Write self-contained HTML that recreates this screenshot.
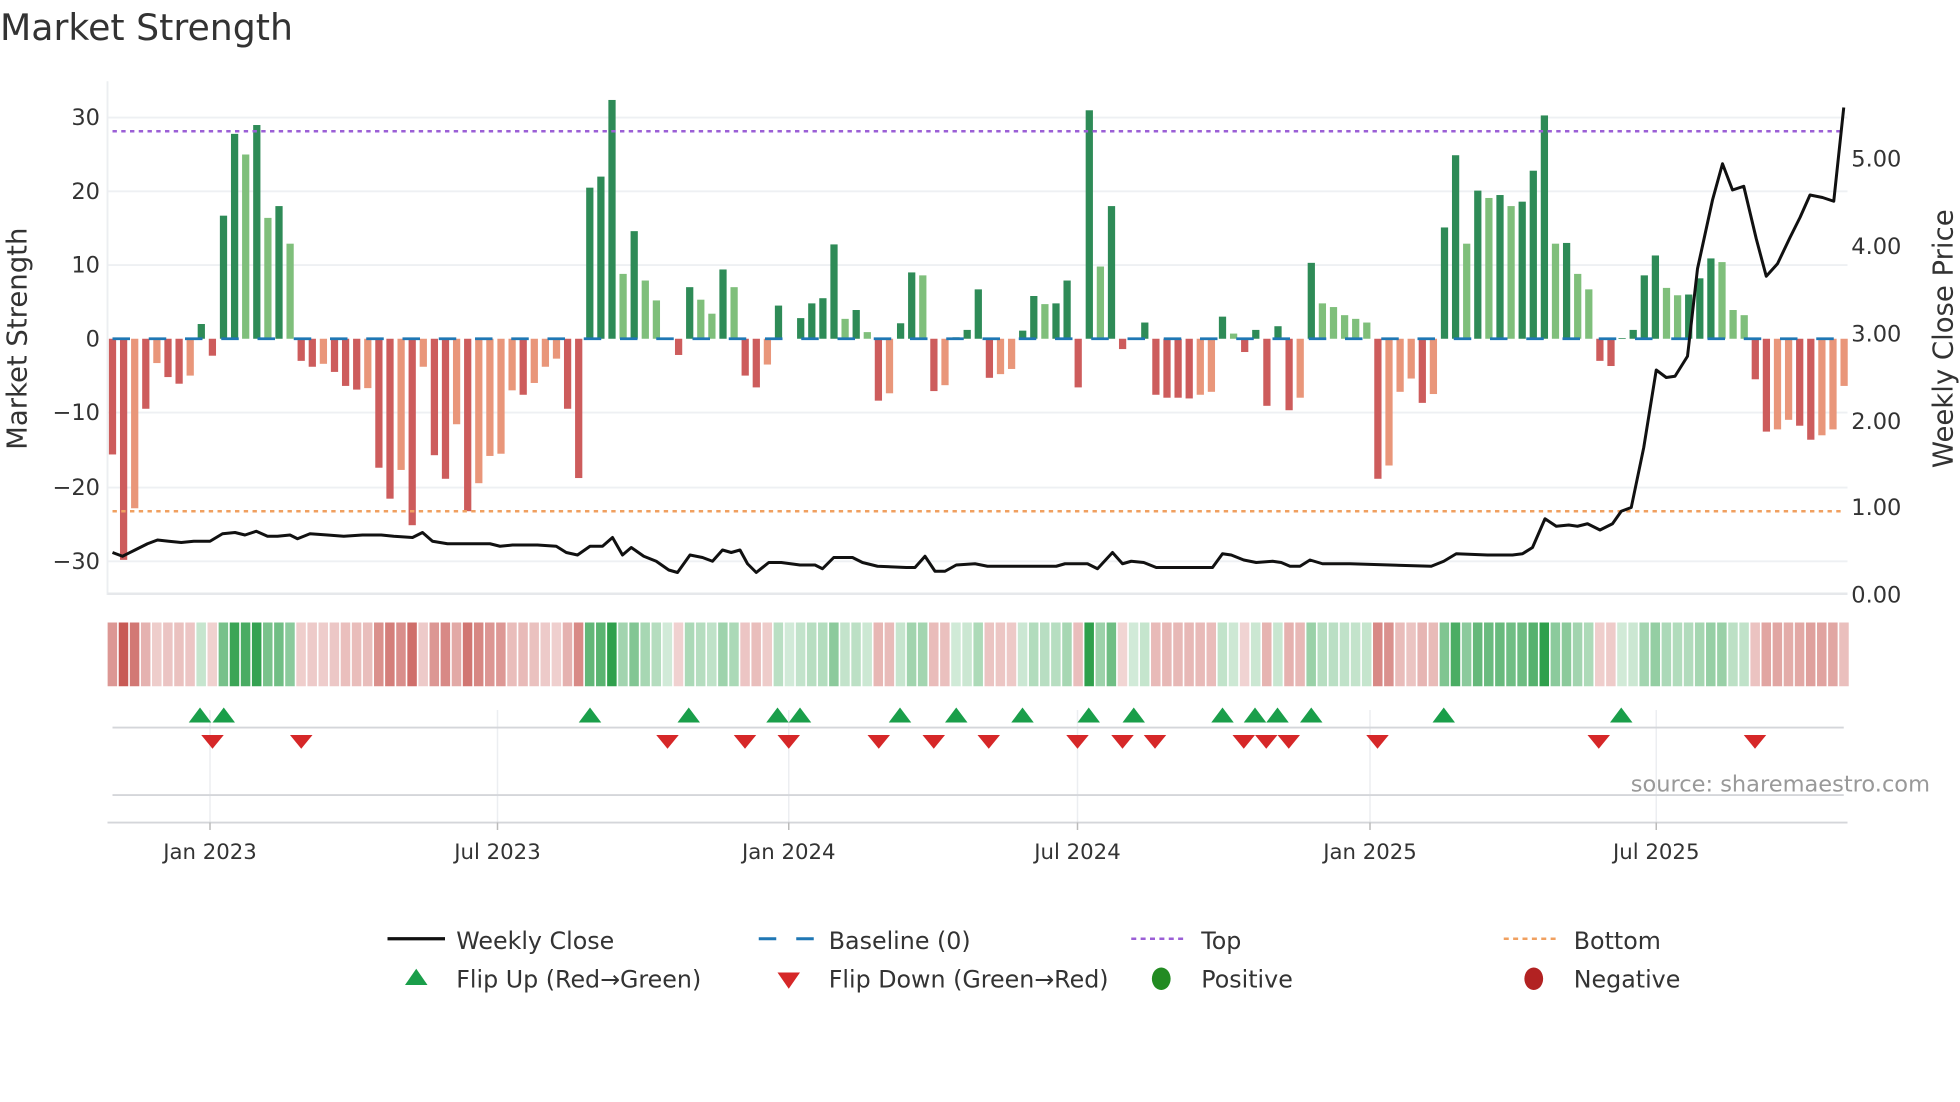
<!DOCTYPE html>
<html><head><meta charset="utf-8"><style>
html,body{margin:0;padding:0;background:#fff;}
svg{display:block;font-family:"DejaVu Sans","Liberation Sans",sans-serif;}
</style></head><body>
<svg id="s" width="1960" height="1102" viewBox="0 0 1568 881.6" xmlns="http://www.w3.org/2000/svg">
<text x="0" y="32" font-size="29" fill="#333">Market Strength</text>
<g stroke="#eef0f3" stroke-width="1.5">
<line x1="86" x2="1478" y1="94" y2="94"/><line x1="86" x2="1478" y1="153" y2="153"/>
<line x1="86" x2="1478" y1="212" y2="212"/><line x1="86" x2="1478" y1="330" y2="330"/>
<line x1="86" x2="1478" y1="390" y2="390"/><line x1="86" x2="1478" y1="449" y2="449"/>
</g>
<line x1="86" x2="86" y1="65" y2="476" stroke="#eceef1" stroke-width="1.5"/>
<line x1="86" x2="1478" y1="475" y2="475" stroke="#e6e8eb" stroke-width="2"/>
<g font-size="18" fill="#333" text-anchor="end">
<text x="80" y="100">30</text><text x="80" y="159">20</text><text x="80" y="218">10</text>
<text x="80" y="277">0</text><text x="80" y="336">−10</text><text x="80" y="396">−20</text><text x="80" y="455">−30</text>
</g>
<g font-size="18" fill="#333">
<text x="1481" y="133">5.00</text><text x="1481" y="203">4.00</text><text x="1481" y="273">3.00</text>
<text x="1481" y="343">2.00</text><text x="1481" y="412">1.00</text><text x="1481" y="482">0.00</text>
</g>
<text transform="translate(21,271) rotate(-90)" font-size="22" fill="#333" text-anchor="middle">Market Strength</text>
<text transform="translate(1562,271) rotate(-90)" font-size="22" fill="#333" text-anchor="middle">Weekly Close Price</text>
<g id="bars"></g>
<line x1="90" x2="1476" y1="271" y2="271" stroke="#1f77b4" stroke-width="2.2" stroke-dasharray="14 15"/>
<line x1="90" x2="1476" y1="105" y2="105" stroke="#9b5fd6" stroke-width="2" stroke-dasharray="3.5 3.5"/>
<line x1="90" x2="1476" y1="409" y2="409" stroke="#f0a060" stroke-width="2" stroke-dasharray="3.5 3.5"/>
<polyline fill="none" stroke="#111" stroke-width="2.4" stroke-linejoin="round" points="90,442 98,445 108,440 118,435 126,432 135,433 145,434 155,433 168,433 178,427 188,426 196,428 205,425 214,429 222,429 232,428 238,431 248,427 262,428 275,429 290,428 305,428 315,429 330,430 338,426 346,433 358,435 375,435 392,435 400,437 410,436 430,436 445,437 453,442 462,444 472,437 482,437 490,430 498,444 505,438 515,445 525,449 535,456 542,458 552,444 562,446 570,449 578,440 585,442 592,440 598,451 605,458 615,450 625,450 640,452 652,452 658,455 667,446 682,446 690,450 702,453 725,454 732,454 740,445 748,457 756,457 765,452 780,451 790,453 800,453 830,453 845,453 852,451 870,451 878,455 890,442 898,451 905,449 915,450 925,454 970,454 978,443 985,444 995,448 1005,450 1018,449 1025,450 1032,453 1040,453 1048,448 1058,451 1080,451 1145,453 1155,449 1165,443 1190,444 1210,444 1218,443 1226,438 1236,415 1245,421 1255,420 1262,421 1270,419 1280,424 1290,419 1297,409 1305,406 1315,358 1325,296 1333,302 1340,301 1350,285 1358,215 1370,160 1378,131 1386,152 1395,149 1405,191 1413,221 1422,211 1432,190 1440,174 1448,156 1458,158 1467,161 1475,86"/>
<g id="heat"></g>
<g stroke="#eceef1" stroke-width="1.2">
<line x1="168" x2="168" y1="568" y2="658"/><line x1="398" x2="398" y1="568" y2="658"/>
<line x1="631" x2="631" y1="568" y2="658"/><line x1="862" x2="862" y1="568" y2="658"/>
<line x1="1096" x2="1096" y1="568" y2="658"/><line x1="1325" x2="1325" y1="568" y2="658"/>
</g>
<line x1="90" x2="1475" y1="582" y2="582" stroke="#d4d6da" stroke-width="1.5"/>
<line x1="90" x2="1475" y1="636" y2="636" stroke="#d4d6da" stroke-width="1.5"/>
<line x1="86" x2="1478" y1="658" y2="658" stroke="#d4d6da" stroke-width="1.5"/>
<g stroke="#bbb" stroke-width="1.2">
<line x1="168" x2="168" y1="658" y2="664"/><line x1="398" x2="398" y1="658" y2="664"/>
<line x1="631" x2="631" y1="658" y2="664"/><line x1="862" x2="862" y1="658" y2="664"/>
<line x1="1096" x2="1096" y1="658" y2="664"/><line x1="1325" x2="1325" y1="658" y2="664"/>
</g>
<g id="mk"></g>
<text x="1544" y="633" font-size="18" fill="#999" text-anchor="end">source: sharemaestro.com</text>
<g font-size="17" fill="#333" text-anchor="middle">
<text x="168" y="687">Jan 2023</text><text x="398" y="687">Jul 2023</text><text x="631" y="687">Jan 2024</text>
<text x="862" y="687">Jul 2024</text><text x="1096" y="687">Jan 2025</text><text x="1325" y="687">Jul 2025</text>
</g>
<g font-size="19" fill="#333">
<line x1="310" x2="356" y1="751" y2="751" stroke="#111" stroke-width="2.6"/>
<text x="365" y="759">Weekly Close</text>
<line x1="607" x2="651" y1="751" y2="751" stroke="#1f77b4" stroke-width="2.4" stroke-dasharray="14 16"/>
<text x="663" y="759">Baseline (0)</text>
<line x1="905" x2="949" y1="751" y2="751" stroke="#9b5fd6" stroke-width="2" stroke-dasharray="4 3.5"/>
<text x="961" y="759">Top</text>
<line x1="1203" x2="1247" y1="751" y2="751" stroke="#f0a060" stroke-width="2" stroke-dasharray="4 3.5"/>
<text x="1259" y="759">Bottom</text>
<polygon points="324,788 342,788 333,775" fill="#1a9e4a"/>
<text x="365" y="790">Flip Up (Red→Green)</text>
<polygon points="622,778 640,778 631,791" fill="#d62728"/>
<text x="663" y="790">Flip Down (Green→Red)</text>
<ellipse cx="929" cy="783" rx="7.5" ry="9" fill="#228b22"/>
<text x="961" y="790">Positive</text>
<ellipse cx="1227" cy="783" rx="7.5" ry="9" fill="#b22222"/>
<text x="1259" y="790">Negative</text>
</g>
</svg>
<script>
(function(){
var v=[-15.7,-30,-23,-9.5,-3.3,-5.2,-6.1,-5,2,-2.3,16.7,27.8,25,29,16.4,18,12.9,-3,-3.8,-3.4,-4.5,-6.4,-6.9,-6.7,-17.5,-21.7,-17.8,-25.3,-3.8,-15.8,-19,-11.6,-23.4,-19.6,-15.9,-15.6,-7,-7.6,-6,-3.8,-2.7,-9.5,-18.9,20.5,22,32.4,8.8,14.6,7.9,5.2,0,-2.2,
7,5.3,3.4,9.4,7,-5,-6.6,-3.5,4.5,0,2.8,4.8,5.5,12.8,2.7,3.9,0.9,-8.4,-7.4,2.1,9,8.6,-7.1,-6.3,0.2,1.2,6.7,-5.3,-4.8,-4.1,1.1,5.8,4.7,4.8,7.9,-6.6,31,9.8,18,-1.4,0,2.2,-7.6,-8,-8,-8.1,-7.6,-7.2,3,0.7,-1.8,1.2,-9.1,
1.7,-9.7,-8,10.3,4.8,4.3,3.2,2.7,2.2,-19,-17.2,-7.2,-5.4,-8.7,-7.5,15.1,24.9,12.9,20.1,19.1,19.5,18,18.6,22.8,30.3,12.9,13,8.8,6.7,-3,-3.7,0.1,1.2,8.6,11.3,6.9,5.9,6,8.2,10.9,10.4,3.9,3.2,-5.5,-12.6,-12.3,-11,-11.8,-13.7,-13.1,-12.3,-6.4];
var light={3:1,5:1,8:1,13:1,15:1,17:1,20:1,24:1,27:1,29:1,32:1,34:1,35:1,36:1,37:1,39:1,40:1,41:1,47:1,49:1,50:1,54:1,55:1,57:1,60:1,67:1,69:1,71:1,74:1,76:1,81:1,82:1,85:1,90:1,99:1,100:1,102:1,108:1,110:1,111:1,112:1,113:1,114:1,116:1,117:1,118:1,120:1,123:1,125:1,127:1,131:1,133:1,134:1,141:1,142:1,146:1,147:1,148:1,151:1,152:1,155:1,156:1,157:1};
var ns="http://www.w3.org/2000/svg",b=document.getElementById("bars"),h=document.getElementById("heat");
function mix(c,t){return "rgb("+c.map(function(x){return Math.round(255+(x-255)*t)}).join(",")+")";}
for(var i=0;i<v.length;i++){
 var x=90+i*8.88,val=v[i],pos=val>=0,l=light[i+1];
 var col=pos?(l?"#7fbf7b":"#2e8b57"):(l?"#e9967a":"#cd5c5c");
 var r=document.createElementNS(ns,"rect");
 var yTop=pos?271-val*5.896:271,hh=Math.abs(val)*5.896;
 r.setAttribute("x",x-2.9);r.setAttribute("width",5.8);r.setAttribute("y",yTop);r.setAttribute("height",hh);r.setAttribute("fill",col);b.appendChild(r);
 var t=0.22+0.78*Math.min(Math.abs(val)/30,1);
 var hc=pos?mix([47,160,76],t):mix([200,90,85],t);
 var q=document.createElementNS(ns,"rect");
 q.setAttribute("x",x-3.9);q.setAttribute("width",7.6);q.setAttribute("y",498);q.setAttribute("height",51);q.setAttribute("fill",hc);h.appendChild(q);
}
var up=[160,179,472,551,622,640,720,765,818,871,907,978,1004,1022,1049,1155,1297],dn=[170,241,534,596,631,703,747,791,862,898,924,995,1013,1031,1102,1279,1404],m=document.getElementById("mk");
up.forEach(function(x){var p=document.createElementNS(ns,"polygon");p.setAttribute("points",(x-9)+",578 "+(x+9)+",578 "+x+",566");p.setAttribute("fill","#1a9e4a");m.appendChild(p);});
dn.forEach(function(x){var p=document.createElementNS(ns,"polygon");p.setAttribute("points",(x-9)+",588 "+(x+9)+",588 "+x+",599");p.setAttribute("fill","#d62728");m.appendChild(p);});
})();
</script>
</body></html>
